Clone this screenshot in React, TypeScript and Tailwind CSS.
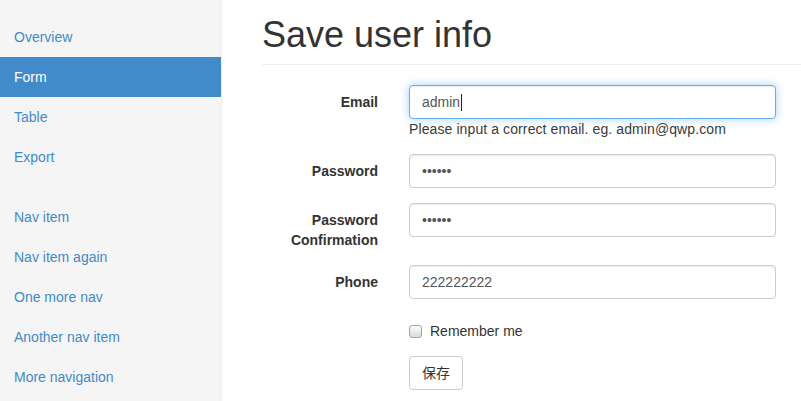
import React from "react";

const navTop = ["Overview", "Form", "Table", "Export"];
const navBottom = ["Nav item", "Nav item again", "One more nav", "Another nav item", "More navigation"];

function NavList({ items, active }: { items: string[]; active?: string }) {
  return (
    <ul className="mb-[20px]">
      {items.map((item) => (
        <li key={item}>
          <a
            href="#"
            className={
              item === active
                ? "block h-[40px] bg-[#428bca] pl-[14px] leading-[40px] text-white"
                : "block h-[40px] pl-[14px] leading-[40px] text-[#428bca]"
            }
          >
            {item}
          </a>
        </li>
      ))}
    </ul>
  );
}

function Field({ label, children }: { label: React.ReactNode; children: React.ReactNode }) {
  return (
    <div className="mb-[15px] grid grid-cols-[116px_1fr] gap-x-[31px]">
      <label className="pt-[7px] text-right font-bold leading-[20px] text-[#333]">{label}</label>
      <div>{children}</div>
    </div>
  );
}

const inputBase =
  "flex h-[34px] w-full items-center rounded-[4px] border border-[#ccc] bg-white px-[12px] text-[#555] shadow-[inset_0_1px_1px_rgba(0,0,0,0.075)]";

export default function App() {
  return (
    <div className="flex min-h-[401px] font-['Liberation_Sans','Noto_Sans_CJK_SC',sans-serif] text-[14px] leading-[20px] text-[#333]">
      <aside className="w-[222px] shrink-0 border-r border-[#eee] bg-[#f5f5f5] pt-[17px]">
        <NavList items={navTop} active="Form" />
        <NavList items={navBottom} />
      </aside>

      <main className="flex-1 pl-[40px] pt-[15px]">
        <h1 className="mb-[20px] border-b border-[#eee] pb-[9px] text-[36px] font-medium leading-[40px] text-[#333]">
          Save user info
        </h1>

        <form className="pr-[25px]" onSubmit={(e) => e.preventDefault()}>
          <Field label="Email">
            <div className="flex h-[34px] w-full items-center rounded-[4px] border border-[#66afe9] bg-white px-[12px] text-[#555] shadow-[inset_0_1px_1px_rgba(0,0,0,0.075),0_0_8px_rgba(102,175,233,0.6)]">
              <span>admin</span>
              <span className="ml-px h-[17px] w-px bg-[#222]" />
            </div>
            <span className="block tracking-[0.1px] text-[#3a3a3a]">
              Please input a correct email. eg. admin@qwp.com
            </span>
          </Field>

          <Field label="Password">
            <div className={inputBase}>••••••</div>
          </Field>

          <Field
            label={
              <>
                Password
                <br />
                Confirmation
              </>
            }
          >
            <div className={inputBase}>••••••</div>
          </Field>

          <Field label="Phone">
            <div className={inputBase}>222222222</div>
          </Field>

          <div className="mb-[15px] grid grid-cols-[116px_1fr] gap-x-[31px]">
            <div />
            <label className="flex items-start pt-[7px]">
              <span className="mt-[4px] h-[13px] w-[13px] rounded-[3px] border border-[#a3a3a3] bg-linear-to-b from-[#fdfdfd] to-[#dadada]" />
              <span className="ml-[8px]">Remember me</span>
            </label>
          </div>

          <div className="grid grid-cols-[116px_1fr] gap-x-[31px]">
            <div />
            <div>
              <button
                type="submit"
                className="h-[34px] rounded-[4px] border border-[#ccc] bg-white px-[12px] leading-[20px] text-[#333]"
              >
                保存
              </button>
            </div>
          </div>
        </form>
      </main>
    </div>
  );
}
